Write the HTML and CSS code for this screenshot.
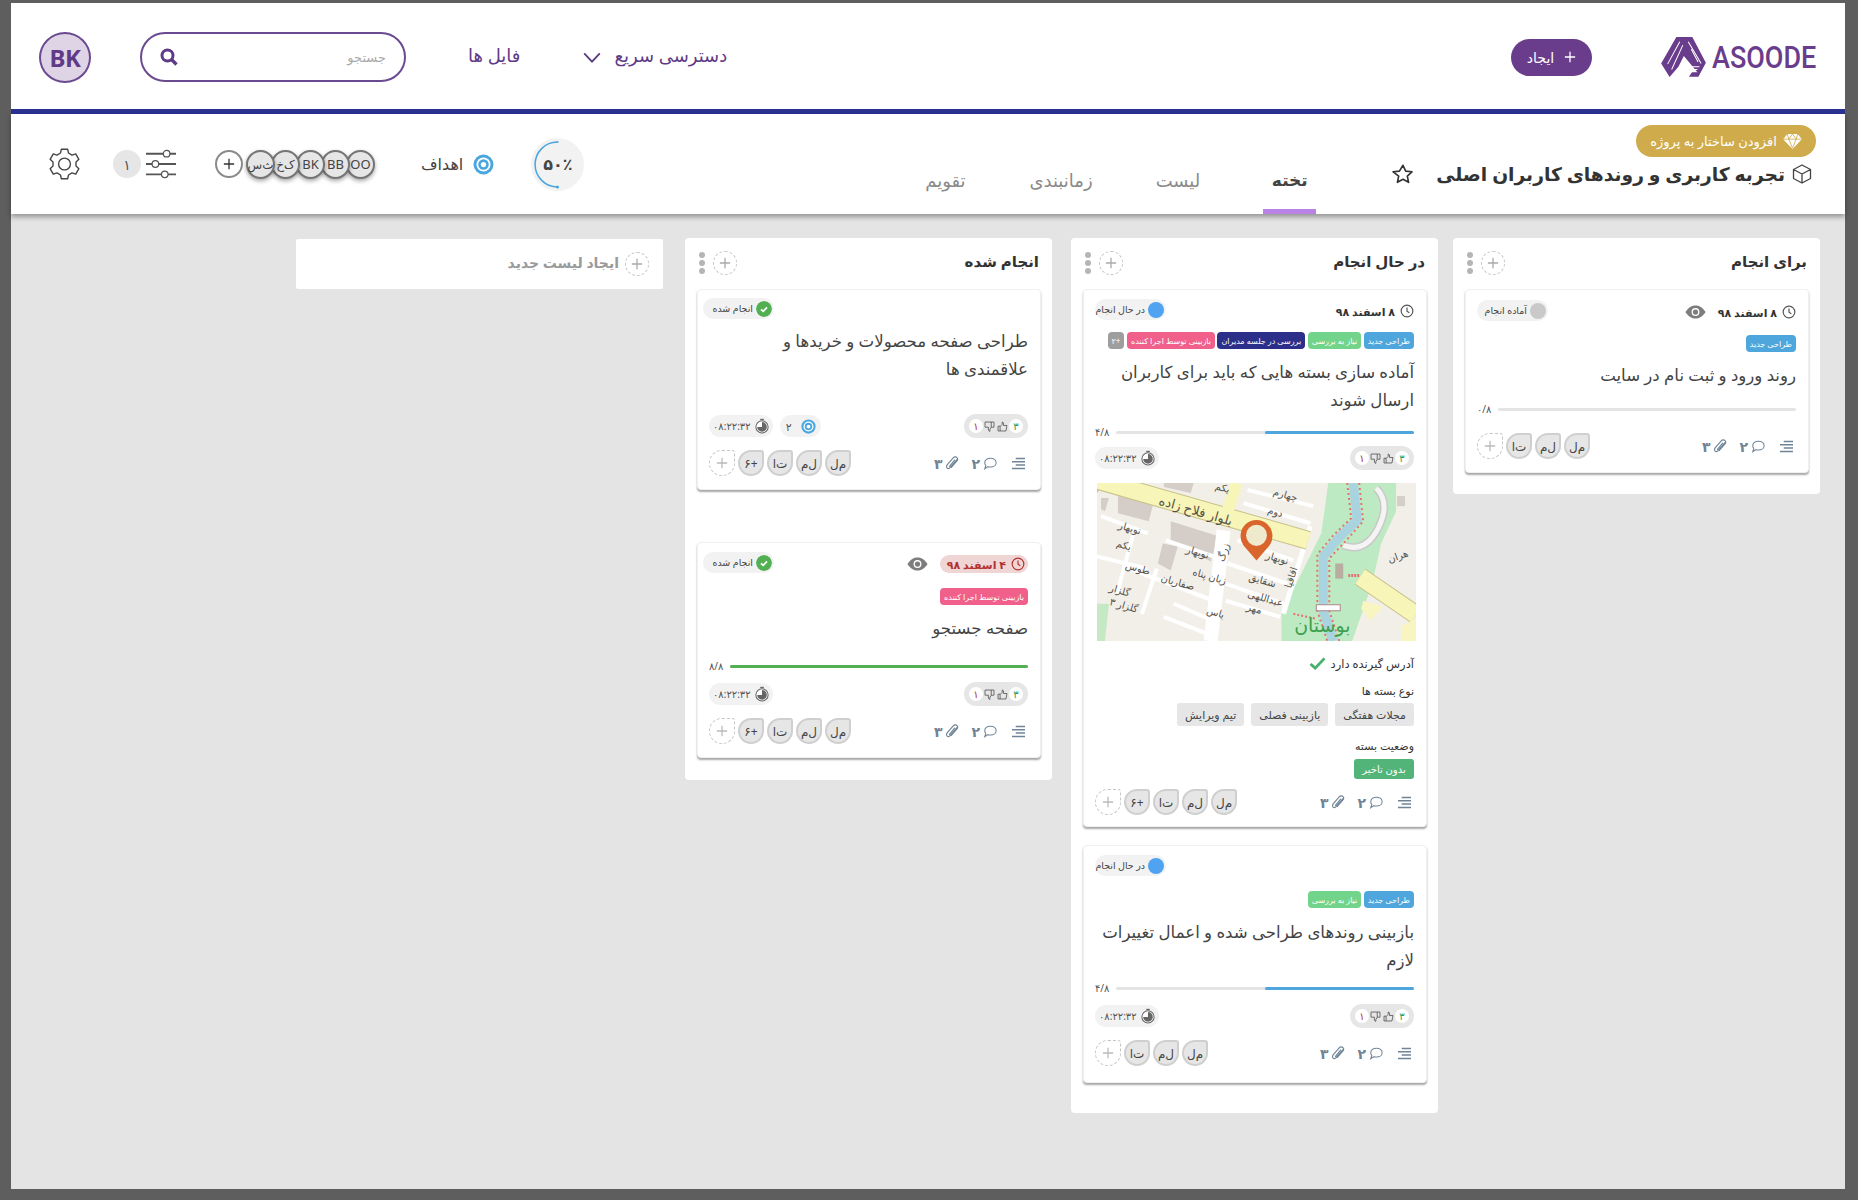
FILE: index.html
```
<!DOCTYPE html>
<html lang="fa" dir="rtl">
<head>
<meta charset="utf-8">
<title>تخته پروژه</title>
<link rel="stylesheet" href="styles.css">
</head>
<body>
<svg class="defs" width="0" height="0" aria-hidden="true">
  <defs>
    <symbol id="i-clock" viewBox="0 0 24 24"><circle cx="12" cy="12" r="10" fill="none" stroke="currentColor" stroke-width="2"/><path d="M12 6v6.500l4 2.500" fill="none" stroke="currentColor" stroke-width="2"/></symbol>
    <symbol id="i-eye" viewBox="0 0 24 16"><path d="M0.500 8C4 2.500 8 0.500 12 0.500S20 2.500 23.500 8C20 13.500 16 15.500 12 15.500S4 13.500 0.500 8z" fill="#7d7d7d"/><circle cx="12" cy="8" r="4.500" fill="#fff"/><circle cx="12" cy="8" r="3" fill="#7d7d7d"/></symbol>
    <symbol id="i-lines" viewBox="0 0 14 14"><path d="M4 1.500h10M0 5h14M4 8.500h10M0 12.500h14" stroke="#6f8496" stroke-width="1.600" fill="none"/></symbol>
    <symbol id="i-comment" viewBox="0 0 16 14"><path d="M8.500 1C12.200 1 15 3 15 6S12.200 11 8.500 11C7.500 11 6.500 10.900 5.700 10.600L2 13 3.200 9.300C2.400 8.300 2 7.200 2 6 2 3 4.800 1 8.500 1z" fill="none" stroke="#6f8496" stroke-width="1.200"/></symbol>
    <symbol id="i-clip" viewBox="0 0 14 16"><path d="M12.500 3.500L5 12.500C3.800 14 2 13.500 1.500 12.500S1.200 10.300 2 9.300L8.300 2C9.500.6 11.400.8 12.300 1.700S13.300 4 12.300 5.200L6.300 12.200M9.800 4.500L4.300 11" fill="none" stroke="#6f8496" stroke-width="1.200" stroke-linecap="round"/></symbol>
    <symbol id="i-up" viewBox="0 0 16 16"><path d="M1.500 7.500h3v7h-3zM4.500 8L7.500 5V1.500C9.500 1.500 9.800 3.500 9.300 6.500H14.500L13 14.500H4.500" fill="none" stroke="#555" stroke-width="1.200"/></symbol>
    <symbol id="i-down" viewBox="0 0 16 16"><path d="M1.500 1.500h13v7.500h-4l-2 3.500v2.500C6.500 15 6 13 6.500 9H1.500z" fill="none" stroke="#555" stroke-width="1.200"/><path d="M10.500 1.500v7.500" stroke="#555" stroke-width="1.200"/></symbol>
    <symbol id="i-timer" viewBox="0 0 16 18"><path d="M6 .8h4v1.500H6z" fill="#666"/><circle cx="8" cy="10" r="7" fill="#fff" stroke="#666" stroke-width="1.200"/><path d="M8 10V4.500A5.500 5.500 0 1 1 2.500 10z" fill="#666"/></symbol>
    <symbol id="i-target" viewBox="0 0 20 20"><circle cx="10" cy="10" r="9.500" fill="#4aa6e0"/><circle cx="10" cy="10" r="6.700" fill="#fff"/><circle cx="10" cy="10" r="5" fill="#4aa6e0"/><circle cx="10" cy="10" r="2.500" fill="#fff"/></symbol>
    <symbol id="i-ok" viewBox="0 0 16 16"><circle cx="8" cy="8" r="8" fill="#52b052"/><path d="M5 8.300l2.200 2L11 6.300" fill="none" stroke="#fff" stroke-width="1.800"/></symbol>
    <symbol id="i-plus" viewBox="0 0 14 14"><path d="M7 1v12M1 7h12" fill="none" stroke="currentColor" stroke-width="1.500"/></symbol>
  </defs>
</svg>

<div class="app">
  <header class="topbar">
    <a class="logo">
      <svg class="logo-mark" viewBox="33 22 132 118"><path d="M78 22H125L165 98 143 139H115L124 126H140L100 78 84 110 58 140 33 100z" fill="#6a3d8c"/><path d="M88 36L52 102M97 46L64 118M113 36L151 100M122 58L142 96M110 110H146M112 118H140" stroke="#fff" stroke-width="3" fill="none"/></svg>
      <span class="logo-text">ASOODE</span>
    </a>
    <button class="create"><svg class="ico12"><use href="#i-plus"/></svg><span>ایجاد</span></button>
    <nav class="nav">
      <a class="nav-link">دسترسی سریع
        <svg class="chev" viewBox="0 0 20 12"><path d="M1.500 1.500L10 10.500 18.500 1.500" fill="none" stroke="#5b3a80" stroke-width="2"/></svg>
      </a>
      <a class="nav-link nav-files">فایل ها</a>
      <div class="search">
        <span class="search-hint">جستجو</span>
        <svg class="search-ico" viewBox="0 0 18 18"><circle cx="7.500" cy="7.500" r="5.500" fill="none" stroke="#5f3a86" stroke-width="3"/><path d="M11.500 11.500L16.500 16.500" stroke="#5f3a86" stroke-width="3.400"/></svg>
      </div>
      <div class="me">BK</div>
    </nav>
  </header>
  <div class="rule"></div>
  <section class="subbar">
    <div class="project">
      <button class="gold">
        <svg class="gem" viewBox="0 0 20 16"><path d="M4.500 0h11L20 5.500 10 16 0 5.500z" fill="#fff"/><path d="M0 5.500h20M6 5.500L10 15l4-9.500M4.500 0L6 5.500 10 0l4 5.500L15.500 0" fill="none" stroke="#cfab4c" stroke-width=".9"/></svg>
        <span>افزودن ساختار به پروژه</span>
      </button>
      <div class="proj-title">
        <svg class="cube" viewBox="0 0 20 20"><path d="M10 1L18.500 5.500V14.500L10 19 1.500 14.500V5.500zM1.500 5.500L10 10 18.500 5.500M10 10V19" fill="none" stroke="#444" stroke-width="1.300" stroke-linejoin="round"/></svg>
        <h1>تجربه کاربری و روندهای کاربران اصلی</h1>
        <svg class="star" viewBox="0 0 24 24"><path d="M12 2.500l2.900 6.300 6.900.8-5.100 4.700 1.400 6.800-6.100-3.400-6.100 3.400 1.400-6.800L1.200 9.600l6.900-.8z" fill="none" stroke="#333" stroke-width="1.800" stroke-linejoin="round"/></svg>
      </div>
    </div>
    <div class="tabs">
      <a class="tab tab-on">تخته</a>
      <a class="tab">لیست</a>
      <a class="tab">زمانبندی</a>
      <a class="tab">تقویم</a>
    </div>
    <div class="tools">
      <div class="ring">
        <svg class="ring-arc" viewBox="0 0 52 52"><path d="M26 4A22 22 0 0 0 26 48" fill="none" stroke="#4aa6e0" stroke-width="1.500"/><circle cx="26" cy="48" r="1.500" fill="#4aa6e0"/><circle cx="26" cy="4" r="1" fill="#4aa6e0"/></svg>
        <span class="ring-num">۵۰٪</span>
      </div>
      <div class="goals"><svg class="goal-ico"><use href="#i-target"/></svg><span>اهداف</span></div>
      <div class="team">
        <span class="face">OO</span><span class="face">BB</span><span class="face">BK</span><span class="face face-fa">ک‌خ</span><span class="face face-fa">ث‌س</span>
      </div>
      <button class="add-face"><svg class="ico12"><use href="#i-plus"/></svg></button>
      <svg class="sliders" viewBox="0 0 32 32"><path d="M0 5h32M0 16h32M0 27h32" stroke="#555" stroke-width="2"/><circle cx="22" cy="5" r="3.500" fill="#fff" stroke="#555" stroke-width="1.300"/><circle cx="10" cy="16" r="3.500" fill="#fff" stroke="#555" stroke-width="1.300"/><circle cx="20" cy="27" r="3.500" fill="#fff" stroke="#555" stroke-width="1.300"/></svg>
      <span class="count">۱</span>
      <svg class="gear" viewBox="0 0 24 24"><path d="M9.710 1.240L14.290 1.240 14.910 4.010 17.460 5.490 20.170 4.640 22.460 8.600 20.370 10.520 20.370 13.480 22.460 15.400 20.170 19.360 17.460 18.510 14.910 19.990 14.290 22.760 9.710 22.760 9.090 19.990 6.540 18.510 3.830 19.360 1.540 15.400 3.630 13.480 3.630 10.520 1.540 8.600 3.830 4.640 6.540 5.490 9.090 4.010z" fill="none" stroke="#444" stroke-width="1" stroke-linejoin="round"/><circle cx="12" cy="12" r="4.300" fill="none" stroke="#444" stroke-width="1"/></svg>
    </div>
  </section>

  <main class="board">

    <section class="col col-b23">
      <div class="col-head"><h2>برای انجام</h2><span class="col-add"><svg class="ico12"><use href="#i-plus"/></svg></span><span class="dots"><i></i><i></i><i></i></span></div>
      <article class="card">
        <div class="row row-top pt11">
          <div class="date"><svg class="ico14"><use href="#i-clock"/></svg><b>۸ اسفند ۹۸</b></div>
          <svg class="eye"><use href="#i-eye"/></svg>
          <div class="status"><i class="dot dot-grey"></i><span>آماده انجام</span></div>
        </div>
        <div class="tags mt14"><span class="tag t-blue">طراحی جدید</span></div>
        <h3 class="mt9">روند ورود و ثبت نام در سایت</h3>
        <div class="prog mt15"><div class="track"></div><span>۰/۸</span></div>
        <div class="foot mt19 pb13">
          <div class="meta"><svg class="m-lines"><use href="#i-lines"/></svg><span class="m"><svg class="m-com"><use href="#i-comment"/></svg>۲</span><span class="m"><svg class="m-clip"><use href="#i-clip"/></svg>۳</span></div>
          <div class="drops"><span class="drop">م‌ل</span><span class="drop">ل‌م</span><span class="drop">ت‌ا</span><span class="drop drop-add"><svg class="ico12"><use href="#i-plus"/></svg></span></div>
        </div>
      </article>
    </section>

    <section class="col col-b30">
      <div class="col-head"><h2>در حال انجام</h2><span class="col-add"><svg class="ico12"><use href="#i-plus"/></svg></span><span class="dots"><i></i><i></i><i></i></span></div>
      <article class="card gap18">
        <div class="row row-top pt10">
          <div class="date"><svg class="ico14"><use href="#i-clock"/></svg><b>۸ اسفند ۹۸</b></div>
          <div class="status"><i class="dot dot-blue"></i><span>در حال انجام</span></div>
        </div>
        <div class="tags mt12"><span class="tag t-blue">طراحی جدید</span><span class="tag t-green">نیاز به بررسی</span><span class="tag t-navy">بررسی در جلسه مدیران</span><span class="tag t-pink">بازبینی توسط اجرا کننده</span><span class="tag t-grey">+۲</span></div>
        <h3 class="mt9">آماده سازی بسته هایی که باید برای کاربران ارسال شوند</h3>
        <div class="prog mt13"><div class="track"><div class="fill f-blue half"></div></div><span>۴/۸</span></div>
        <div class="row mt9">
          <div class="votes"><b class="v-up">۳</b><svg class="th"><use href="#i-up"/></svg><svg class="th"><use href="#i-down"/></svg><b class="v-down">۱</b></div>
          <div class="timer"><svg class="t-ico"><use href="#i-timer"/></svg><span>۰۸:۲۲:۳۲</span></div>
        </div>
        <svg class="map mt13" viewBox="0 0 320 157" preserveAspectRatio="none">
          <rect width="320" height="157" fill="#f2efe9"/>
          <path d="M232 0H300V28L285 60 276 100 256 157H185V130L205 90 225 50z" fill="#bdeac2"/>
          <path d="M0 120H12L8 157H0z" fill="#c5e8c5"/>
          <path d="M0 0H8L0 10z" fill="#f4b97f"/>
          <g fill="#d5cec8"><path d="M21 13L57 18 52 38 21 30z"/><path d="M74 38L122 53 114 78 74 57z"/><path d="M66 60L81 63 74 87 61 80z"/><path d="M67 0H97L94 10 67 4z"/><path d="M4 15H12L8 28 4 26z"/><path d="M301 13H309V23H301z"/><path d="M239 80H247V95H239z" fill="#b7ae9f"/></g>
          <g stroke="#fff" stroke-width="4" fill="none"><path d="M151 7L217 23M147 20L214 40M141 57L197 77M131 80L191 100M129 100L187 120M129 117L184 133M4 33L51 50M69 57L117 73M0 73L50 85M27 83L117 117M77 120L117 137M67 133L111 150M38 45L20 110M60 85L45 130"/></g>
          <path d="M127 47L114 157" stroke="#fff" stroke-width="14"/>
          <path d="M214 43L187 130" stroke="#fff" stroke-width="5"/>
          <path d="M280 5Q295 20 282 45T247 62" fill="none" stroke="#c9c9c9" stroke-width="8"/>
          <path d="M280 5Q295 20 282 45T247 62" fill="none" stroke="#f4f4f4" stroke-width="5"/>
          <path d="M257 0L261 37 244 53 227 73V127L237 157" fill="none" stroke="#a9d4df" stroke-width="9"/>
          <path d="M251 0L255 35 237 52 221 71V127L231 157M263 0L267 38 251 56 233 75V127L243 157" fill="none" stroke="#e57373" stroke-width="2" stroke-dasharray="2 3"/>
          <path d="M220 121H244V127H220z" fill="#fff" stroke="#a88"/>
          <path d="M0 -3L212 57M264 93L320 131" stroke="#c7c28a" stroke-width="19"/>
          <path d="M0 -3L212 57M264 93L320 131" stroke="#f7f5b8" stroke-width="17"/>
          <path d="M140 0L131 28" stroke="#f7f5b8" stroke-width="12"/>
          <path d="M267 117L287 123 274 137 265 125z" fill="#f9f5c0"/>
          <path d="M305 157V142L320 135V157z" fill="#f9f5c0"/>
          <path d="M197 130L220 135" stroke="#e57373" stroke-width="2" stroke-dasharray="2 2"/>
          <path d="M252 92L264 92" stroke="#e57373" stroke-width="3" stroke-dasharray="2 1"/>
          <g class="map-label">
            <text x="99" y="32" font-size="13" transform="rotate(16 99 28)">بلوار فلاح زاده</text>
            <text x="125" y="8" transform="rotate(16 125 8)">یکم</text>
            <text x="188" y="15" transform="rotate(16 188 15)">چهارم</text>
            <text x="178" y="32" transform="rotate(16 178 32)">دوم</text>
            <text x="32" y="48" transform="rotate(16 32 48)">نوبهار</text>
            <text x="26" y="65" transform="rotate(16 26 65)">یکم</text>
            <text x="100" y="72" transform="rotate(16 100 72)">نوبهار</text>
            <text x="180" y="78" transform="rotate(16 180 78)">نوبهار</text>
            <text x="112" y="96" transform="rotate(16 112 96)">زبان پناه</text>
            <text x="165" y="100" transform="rotate(16 165 100)">شقایق</text>
            <text x="168" y="118" transform="rotate(16 168 118)">عبداللهی</text>
            <text x="157" y="128" transform="rotate(16 157 128)">مهر</text>
            <text x="118" y="132" transform="rotate(16 118 132)">یاس</text>
            <text x="40" y="88" transform="rotate(16 40 88)">طوس</text>
            <text x="80" y="102" transform="rotate(16 80 102)">صفاریان</text>
            <text x="22" y="110" transform="rotate(16 22 110)">گلزار</text>
            <text x="26" y="125" transform="rotate(16 26 125)">گلزار ۳</text>
            <text x="303" y="76" transform="rotate(-20 303 76)">هران</text>
            <text x="198" y="95" transform="rotate(-72 198 95)">اقاقیا</text>
            <text x="130" y="70" transform="rotate(-72 130 70)">زرگ</text>
          </g>
          <text class="map-park" x="226" y="148" font-size="19">بوستان</text>
          <path d="M160 77L147 62A16 16 0 1 1 173 62z" fill="#d9642c"/>
          <circle cx="160" cy="52" r="10.500" fill="#efe9cd"/>
        </svg>
        <div class="has-addr"><span>آدرس گیرنده دارد</span><svg class="tick" viewBox="0 0 18 14"><path d="M1.500 7.500l5 4.500L16.500 1.500" fill="none" stroke="#48b06c" stroke-width="3"/></svg></div>
        <h4 class="mt10">نوع بسته ها</h4>
        <div class="chips"><span class="chip">مجلات هفتگی</span><span class="chip">بازبینی فصلی</span><span class="chip">تیم ویرایش</span></div>
        <h4 class="mt11">وضعیت بسته</h4>
        <div class="chips chips-tight"><span class="chip chip-go">بدون تاخیر</span></div>
        <div class="foot mt10 pb11">
          <div class="meta"><svg class="m-lines"><use href="#i-lines"/></svg><span class="m"><svg class="m-com"><use href="#i-comment"/></svg>۲</span><span class="m"><svg class="m-clip"><use href="#i-clip"/></svg>۳</span></div>
          <div class="drops"><span class="drop">م‌ل</span><span class="drop">ل‌م</span><span class="drop">ت‌ا</span><span class="drop">+۶</span><span class="drop drop-add"><svg class="ico12"><use href="#i-plus"/></svg></span></div>
        </div>
      </article>
      <article class="card">
        <div class="row pt10"><div class="status status-end"><i class="dot dot-blue"></i><span>در حال انجام</span></div></div>
        <div class="tags mt15"><span class="tag t-blue">طراحی جدید</span><span class="tag t-green">نیاز به بررسی</span></div>
        <h3 class="mt10">بازبینی روندهای طراحی شده و اعمال تغییرات لازم</h3>
        <div class="prog mt9"><div class="track"><div class="fill f-blue half"></div></div><span>۴/۸</span></div>
        <div class="row mt11">
          <div class="votes"><b class="v-up">۳</b><svg class="th"><use href="#i-up"/></svg><svg class="th"><use href="#i-down"/></svg><b class="v-down">۱</b></div>
          <div class="timer"><svg class="t-ico"><use href="#i-timer"/></svg><span>۰۸:۲۲:۳۲</span></div>
        </div>
        <div class="foot mt12 pb16">
          <div class="meta"><svg class="m-lines"><use href="#i-lines"/></svg><span class="m"><svg class="m-com"><use href="#i-comment"/></svg>۲</span><span class="m"><svg class="m-clip"><use href="#i-clip"/></svg>۳</span></div>
          <div class="drops"><span class="drop">م‌ل</span><span class="drop">ل‌م</span><span class="drop">ت‌ا</span><span class="drop drop-add"><svg class="ico12"><use href="#i-plus"/></svg></span></div>
        </div>
      </article>
    </section>

    <section class="col col-b22">
      <div class="col-head"><h2>انجام شده</h2><span class="col-add"><svg class="ico12"><use href="#i-plus"/></svg></span><span class="dots"><i></i><i></i><i></i></span></div>
      <article class="card gap52">
        <div class="row pt8"><div class="status status-end"><svg class="dot"><use href="#i-ok"/></svg><span>انجام شده</span></div></div>
        <h3 class="mt8">طراحی صفحه محصولات و خریدها و<br>علاقمندی ها</h3>
        <div class="row mt31">
          <div class="votes"><b class="v-up">۳</b><svg class="th"><use href="#i-up"/></svg><svg class="th"><use href="#i-down"/></svg><b class="v-down">۱</b></div>
          <div class="pills">
            <div class="timer goal"><svg class="goal-small"><use href="#i-target"/></svg><span>۲</span></div>
            <div class="timer"><svg class="t-ico"><use href="#i-timer"/></svg><span>۰۸:۲۲:۳۲</span></div>
          </div>
        </div>
        <div class="foot mt12 pb13">
          <div class="meta"><svg class="m-lines"><use href="#i-lines"/></svg><span class="m"><svg class="m-com"><use href="#i-comment"/></svg>۲</span><span class="m"><svg class="m-clip"><use href="#i-clip"/></svg>۳</span></div>
          <div class="drops"><span class="drop">م‌ل</span><span class="drop">ل‌م</span><span class="drop">ت‌ا</span><span class="drop">+۶</span><span class="drop drop-add"><svg class="ico12"><use href="#i-plus"/></svg></span></div>
        </div>
      </article>
      <article class="card">
        <div class="row row-top pt9">
          <div class="date date-late"><svg class="ico14"><use href="#i-clock"/></svg><b>۴ اسفند ۹۸</b></div>
          <svg class="eye"><use href="#i-eye"/></svg>
          <div class="status"><svg class="dot"><use href="#i-ok"/></svg><span>انجام شده</span></div>
        </div>
        <div class="tags mt15"><span class="tag t-pink">بازبینی توسط اجرا کننده</span></div>
        <h3 class="mt9">صفحه جستجو</h3>
        <div class="prog mt19"><div class="track"><div class="fill f-green"></div></div><span>۸/۸</span></div>
        <div class="row mt11">
          <div class="votes"><b class="v-up">۳</b><svg class="th"><use href="#i-up"/></svg><svg class="th"><use href="#i-down"/></svg><b class="v-down">۱</b></div>
          <div class="timer"><svg class="t-ico"><use href="#i-timer"/></svg><span>۰۸:۲۲:۳۲</span></div>
        </div>
        <div class="foot mt12 pb13">
          <div class="meta"><svg class="m-lines"><use href="#i-lines"/></svg><span class="m"><svg class="m-com"><use href="#i-comment"/></svg>۲</span><span class="m"><svg class="m-clip"><use href="#i-clip"/></svg>۳</span></div>
          <div class="drops"><span class="drop">م‌ل</span><span class="drop">ل‌م</span><span class="drop">ت‌ا</span><span class="drop">+۶</span><span class="drop drop-add"><svg class="ico12"><use href="#i-plus"/></svg></span></div>
        </div>
      </article>
    </section>

    <button class="new-list"><span class="col-add"><svg class="ico12"><use href="#i-plus"/></svg></span><span class="new-label">ایجاد لیست جدید</span></button>
  </main>
</div>
</body>
</html>
```
FILE: styles.css
```
* { box-sizing: border-box; }
html, body { margin: 0; padding: 0; }
body {
  background: #5e5e5e;
  height: 1200px;
  overflow: hidden;
  padding: 3px 13px 11px 11px;
  font-family: "Noto Sans", "DejaVu Sans", sans-serif;
  color: #333;
}
.defs { position: absolute; }
h1, h2, h3, h4 { margin: 0; font-weight: 400; }
button { font: inherit; border: 0; padding: 0; cursor: pointer; }
svg { display: block; flex: none; }

.app { height: 1186px; background: #e4e4e4; display: flex; flex-direction: column; }

/* top bar */
.topbar { height: 106px; background: #fff; display: flex; align-items: center; padding: 2px 28px 0; }
.logo { display: flex; align-items: center; gap: 6px; direction: ltr; }
.logo-mark { width: 45px; height: 40px; }
.logo-text { display: block; width: 105px; font-family: Roboto, sans-serif; font-weight: 500; font-size: 31px; line-height: 1; color: #6a3d8c; transform: scaleX(.87); transform-origin: left center; white-space: nowrap; }
.create { margin-right: 69px; width: 81px; height: 37px; border-radius: 19px; background: #6a3d8c; color: #fff; display: flex; align-items: center; justify-content: center; gap: 10px; font-size: 14px; }
.ico12 { width: 12px; height: 12px; }
.nav { margin-right: auto; display: flex; align-items: center; color: #5f3a86; }
.nav-link { font-size: 18px; display: flex; align-items: center; gap: 12px; color: #5f3a86; margin-bottom: 4px; }
.nav-files { margin-right: 62px; }
.chev { width: 20px; height: 11px; margin-top: 4px; }
.search { margin-right: 62px; width: 266px; height: 50px; border: 2px solid #6a4a90; border-radius: 25px; display: flex; align-items: center; justify-content: space-between; padding: 0 18px; }
.search-hint { font-size: 13px; color: #aaa; }
.search-ico { width: 18px; height: 18px; }
.me { margin-right: 49px; width: 52px; height: 51px; border-radius: 50%; background: #dfd3e6; border: 2px solid #6a4a90; display: flex; align-items: center; justify-content: center; font-weight: 700; font-size: 24px; direction: ltr; color: #5f3a86; letter-spacing: -.5px; }
.rule { height: 5px; background: #2b3190; }

/* sub bar */
.subbar { height: 100px; background: #fff; display: flex; align-items: stretch; padding: 0 29px 0 37px; box-shadow: 0 3px 5px rgba(0,0,0,.35); position: relative; }
.project { display: flex; flex-direction: column; align-items: flex-start; padding-top: 11px; }
.gold { height: 32px; width: 180px; border-radius: 16px; background: #cfab4c; color: #fff; display: flex; align-items: center; justify-content: center; gap: 6px; font-size: 13px; }
.gem { width: 19px; height: 15px; }
.proj-title { display: flex; align-items: center; padding-right: 4px; margin-top: 1px; }
.cube { width: 20px; height: 20px; }
h1 { margin-right: 7px; font-size: 18.700px; font-weight: 700; color: #333; white-space: nowrap; line-height: 32px; }
.star { width: 22px; height: 22px; margin-right: 22px; }
.tabs { display: flex; align-items: flex-end; gap: 63px; margin-right: 76px; }
.tab { font-size: 18px; color: #8a8a8a; height: 53px; line-height: 26px; padding-top: 6px; border-bottom: 5px solid transparent; min-width: 42px; text-align: center; }
.tab-on { font-size: 17px; color: #444; font-weight: 600; border-bottom-color: #b983e6; min-width: 53px; }
.tools { margin-right: auto; display: flex; align-items: center; }
.ring { width: 53px; height: 53px; border-radius: 50%; background: #f2f2f2; position: relative; display: flex; align-items: center; justify-content: center; }
.ring-arc { position: absolute; inset: 0; width: 53px; height: 53px; }
.ring-num { font-size: 16px; font-weight: 600; color: #444; }
.goals { margin-right: 37px; display: flex; align-items: center; gap: 10px; font-size: 16px; color: #444; }
.goal-ico { width: 21px; height: 21px; }
.team { margin-right: 46px; display: flex; }
.face { width: 29px; height: 29px; border-radius: 50%; background: #e6e6e6; border: 2px solid #757575; box-shadow: 0 2px 4px rgba(0,0,0,.35); margin-left: -4px; font-size: 13px; color: #444; display: flex; align-items: center; justify-content: center; direction: ltr; }
.face-fa { direction: rtl; font-size: 12px; }
.add-face { margin-right: 7px; width: 28px; height: 28px; border-radius: 50%; background: #fff; border: 2px solid #8a8a8a; color: #333; display: flex; align-items: center; justify-content: center; }
.sliders { margin-right: 38px; width: 32px; height: 30px; }
.count { margin-right: 4px; width: 28px; height: 28px; border-radius: 50%; background: #e6e6e6; color: #555; font-size: 14px; display: flex; align-items: center; justify-content: center; }
.gear { margin-right: 32px; width: 33px; height: 36px; }

/* board */
.board { padding: 24px 25px 0 0; display: flex; align-items: flex-start; gap: 15px; }
.col { width: 367px; background: #fff; border-radius: 4px; padding: 0 11px 20px 12px; flex: none; }
.col-b23 { padding-bottom: 21px; }
.col-b30 { padding-bottom: 30px; margin-left: 4px; }
.col-b22 { padding-bottom: 22px; margin-left: 7px; }
.col-b22 .status { margin-left: -6px; }
.col-head { height: 51px; display: flex; align-items: center; padding: 0 2px 2px 2px; }
h2 { font-size: 15px; font-weight: 700; color: #333; margin-left: auto; margin-bottom: 3px; }
.col-add { width: 24px; height: 24px; border: 1.500px dashed #c6c6c6; border-radius: 50%; color: #aaa; display: flex; align-items: center; justify-content: center; margin-left: 8px; }
.dots { display: flex; flex-direction: column; gap: 2px; }
.dots i { width: 6px; height: 6px; border-radius: 50%; background: #b5b5b5; display: block; }
.new-list { width: 367px; height: 50px; margin-top: 1px; background: #fff; border-radius: 2px; flex: none; display: flex; align-items: center; justify-content: flex-start; gap: 6px; padding-right: 14px; font-size: 14px; font-weight: 600; color: #9a9a9a; }
.new-list .col-add { margin: 0; }
.new-label { margin-bottom: 3px; }

/* card */
.card { background: #fff; border: 1px solid #f0f0f0; border-radius: 4px; padding: 0 12px 0 11px; box-shadow: 0 2px 2px rgba(0,0,0,.35); }
.gap18 { margin-bottom: 18px; }
.gap52 { margin-bottom: 52px; }
.row { display: flex; align-items: center; justify-content: space-between; }
.row-top { align-items: flex-start; }
.pt8 { padding-top: 8px; } .pt9 { padding-top: 9px; } .pt10 { padding-top: 9px; } .pt11 { padding-top: 10px; }
.mt8 { margin-top: 8px; } .mt9 { margin-top: 9px; } .mt10 { margin-top: 10px; } .mt11 { margin-top: 11px; } .mt12 { margin-top: 12px; } .mt13 { margin-top: 13px; } .mt14 { margin-top: 14px; } .mt15 { margin-top: 15px; } .mt19 { margin-top: 19px; } .mt31 { margin-top: 31px; }
.pb11 { padding-bottom: 11px; } .pb13 { padding-bottom: 13px; } .pb16 { padding-bottom: 16px; }
.date { display: flex; align-items: center; gap: 5px; font-size: 11px; color: #333; height: 18px; margin-top: 3px; }
.date b { font-weight: 700; }
.ico14 { width: 14px; height: 14px; color: #555; }
.date-late { background: #f0d5d5; color: #b23030; border-radius: 10px; padding: 0 3px 0 7px; }
.date-late .ico14 { color: #b23030; }
.eye { width: 21px; height: 14px; margin: 5px 12px 0 auto; }
.date + .status { margin-right: auto; }
.status { height: 21px; width: 71px; border-radius: 11px; background: #f2f2f2; display: flex; align-items: center; gap: 3px; padding: 0 2px; font-size: 9.500px; color: #444; white-space: nowrap; }
.status-end { margin-right: auto; }
.dot { width: 16px; height: 16px; border-radius: 50%; display: block; flex: none; }
.dot-grey { background: #c9c9c9; }
.dot-blue { background: #4fa3f0; }
.tags { display: flex; gap: 2.500px; }
.tag { height: 17px; border-radius: 4px; color: #fff; font-size: 8px; line-height: 17px; padding: 0 4px; white-space: nowrap; }
.t-blue { background: #4ea6dc; }
.t-green { background: #72d48b; }
.t-navy { background: #2b2f8a; }
.t-pink { background: #f0608a; }
.t-grey { background: #9e9e9e; }
h3 { font-size: 16.600px; line-height: 28px; color: #444; }
.prog { display: flex; align-items: center; height: 10px; gap: 7px; font-size: 10px; color: #555; }
.prog span { min-width: 13px; text-align: left; }
.track { flex: 1; height: 3px; border-radius: 2px; background: #e4e4e4; }
.fill { height: 3px; border-radius: 2px; }
.half { width: 50%; }
.f-blue { background: #4ea6dc; }
.f-green { background: #52b052; width: 100%; }
.votes { width: 64px; height: 24px; border-radius: 12px; background: #e6e6e6; display: flex; align-items: center; justify-content: space-between; padding: 0 5px; font-size: 10px; }
.votes b { width: 14px; height: 14px; border-radius: 50%; background: #fff; text-align: center; line-height: 14px; font-weight: 400; }
.v-up { color: #2f9a52; }
.v-down { color: #b23030; }
.th { width: 11px; height: 11px; }
.pills { display: flex; gap: 7px; }
.timer { height: 22px; min-width: 61px; border-radius: 11px; background: #f2f2f2; display: flex; align-items: center; gap: 4px; padding: 0 4px; font-size: 10px; color: #555; }
.t-ico { width: 14px; height: 16px; }
.goal { min-width: 41px; gap: 9px; padding: 0 5px; font-size: 11px; }
.goal-small { width: 15px; height: 15px; }
.foot { display: flex; align-items: center; justify-content: space-between; }
.meta { display: flex; align-items: center; gap: 12px; color: #6f8496; font-size: 14px; font-weight: 600; padding-right: 3px; }
.m { display: flex; align-items: center; gap: 3px; }
.m-lines { width: 13px; height: 13px; margin-left: 3px; }
.m-com { width: 14px; height: 13px; }
.m-clip { width: 14px; height: 15px; }
.drops { display: flex; gap: 3px; }
.drop { width: 26px; height: 26px; border-radius: 50% 3px 50% 50%; background: #e6e6e6; border: 2px solid #cfcfcf; font-size: 12px; color: #444; display: flex; align-items: center; justify-content: center; }
.drop-add { background: #fff; border: 1.500px dashed #c6c6c6; color: #bbb; }
.map { display: block; width: 319px; height: 158px; margin-right: -2px; }
.map-label { font-family: "Noto Sans", "DejaVu Sans", sans-serif; font-size: 10px; fill: #55524a; text-anchor: middle; }
.map-park { font-family: "Noto Sans", "DejaVu Sans", sans-serif; fill: #3e9f4e; text-anchor: middle; }
.has-addr { display: flex; align-items: center; gap: 5px; font-size: 11.500px; color: #333; margin-top: 13px; height: 18px; }
.tick { width: 17px; height: 13px; }
h4 { font-size: 11px; color: #333; font-weight: 500; line-height: 18px; }
.chips { display: flex; gap: 7px; margin-top: 3px; }
.chips-tight { margin-top: 4px; }
.chip { height: 23px; border-radius: 3px; background: #e6e6e6; font-size: 11px; line-height: 23px; padding: 0 8px; color: #444; white-space: nowrap; }
.chip-go { height: 20px; line-height: 20px; background: #52b478; color: #fff; font-size: 10px; width: 60px; padding: 0; text-align: center; }
```
